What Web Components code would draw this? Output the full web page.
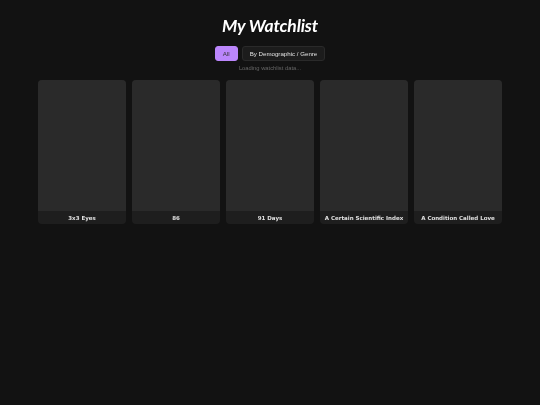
<!DOCTYPE html>
<html>
<head>
<meta charset="utf-8">
<title>My Watchlist</title>
<style>
  html, body { margin: 0; background: #121212; }
</style>
</head>
<body>
<watchlist-page>
  <watch-card title="3x3 Eyes"></watch-card>
  <watch-card title="86"></watch-card>
  <watch-card title="91 Days"></watch-card>
  <watch-card title="A Certain Scientific Index"></watch-card>
  <watch-card title="A Condition Called Love"></watch-card>
</watchlist-page>

<script>
class WatchlistPage extends HTMLElement {
  constructor() {
    super();
    this.attachShadow({ mode: "open" }).innerHTML = `
    <style>
      :host {
        display: block;
        min-height: 405px;
        box-sizing: border-box;
        padding: 14px 38px 0;
        background: #121212;
      }
      h1 {
        margin: 0;
        height: 24px;
        text-align: center;
        color: #fff;
        font: italic 700 17.5px/24px Lato, sans-serif;
        letter-spacing: -0.15px;
        will-change: transform;
      }
      .filters {
        display: flex;
        justify-content: center;
        gap: 4px;
        margin-top: 8px;
        will-change: transform;
      }
      button {
        height: 15px;
        padding: 0 7px;
        border: 1px solid #2a2a2a;
        border-radius: 3px;
        background: #1c1c1c;
        color: #e0e0e0;
        font: 6.15px "Liberation Sans", sans-serif;
      }
      button.active {
        width: 23px;
        padding: 0;
        background: #bb86fc;
        border-color: #bb86fc;
        color: #333;
      }
      .status {
        margin-top: 3px;
        height: 8px;
        text-align: center;
        color: #666;
        font: 5.8px/8px "Liberation Sans", sans-serif;
        will-change: transform;
      }
      .grid {
        display: grid;
        grid-template-columns: repeat(5, 88px);
        gap: 6px;
        margin-top: 8px;
      }
    </style>
    <h1>My Watchlist</h1>
    <div class="filters">
      <button class="active">All</button>
      <button>By Demographic / Genre</button>
    </div>
    <div class="status">Loading watchlist data...</div>
    <div class="grid"><slot></slot></div>
    `;
  }
}

class WatchCard extends HTMLElement {
  constructor() {
    super();
    this.attachShadow({ mode: "open" });
  }
  connectedCallback() {
    this.shadowRoot.innerHTML = `
    <style>
      :host {
        display: flex;
        flex-direction: column;
        height: 144px;
        border-radius: 4px;
        overflow: hidden;
        background: #1e1e1e;
      }
      .poster { flex: 1; background: #2a2a2a; }
      .label {
        height: 13px;
        text-align: center;
        color: #e0e0e0;
        font: 700 5.5px/14px "DejaVu Sans", sans-serif;
        white-space: nowrap;
        will-change: transform;
      }
    </style>
    <div class="poster"></div>
    <div class="label">${this.getAttribute("title")}</div>
    `;
  }
}

customElements.define("watchlist-page", WatchlistPage);
customElements.define("watch-card", WatchCard);
</script>
</body>
</html>
